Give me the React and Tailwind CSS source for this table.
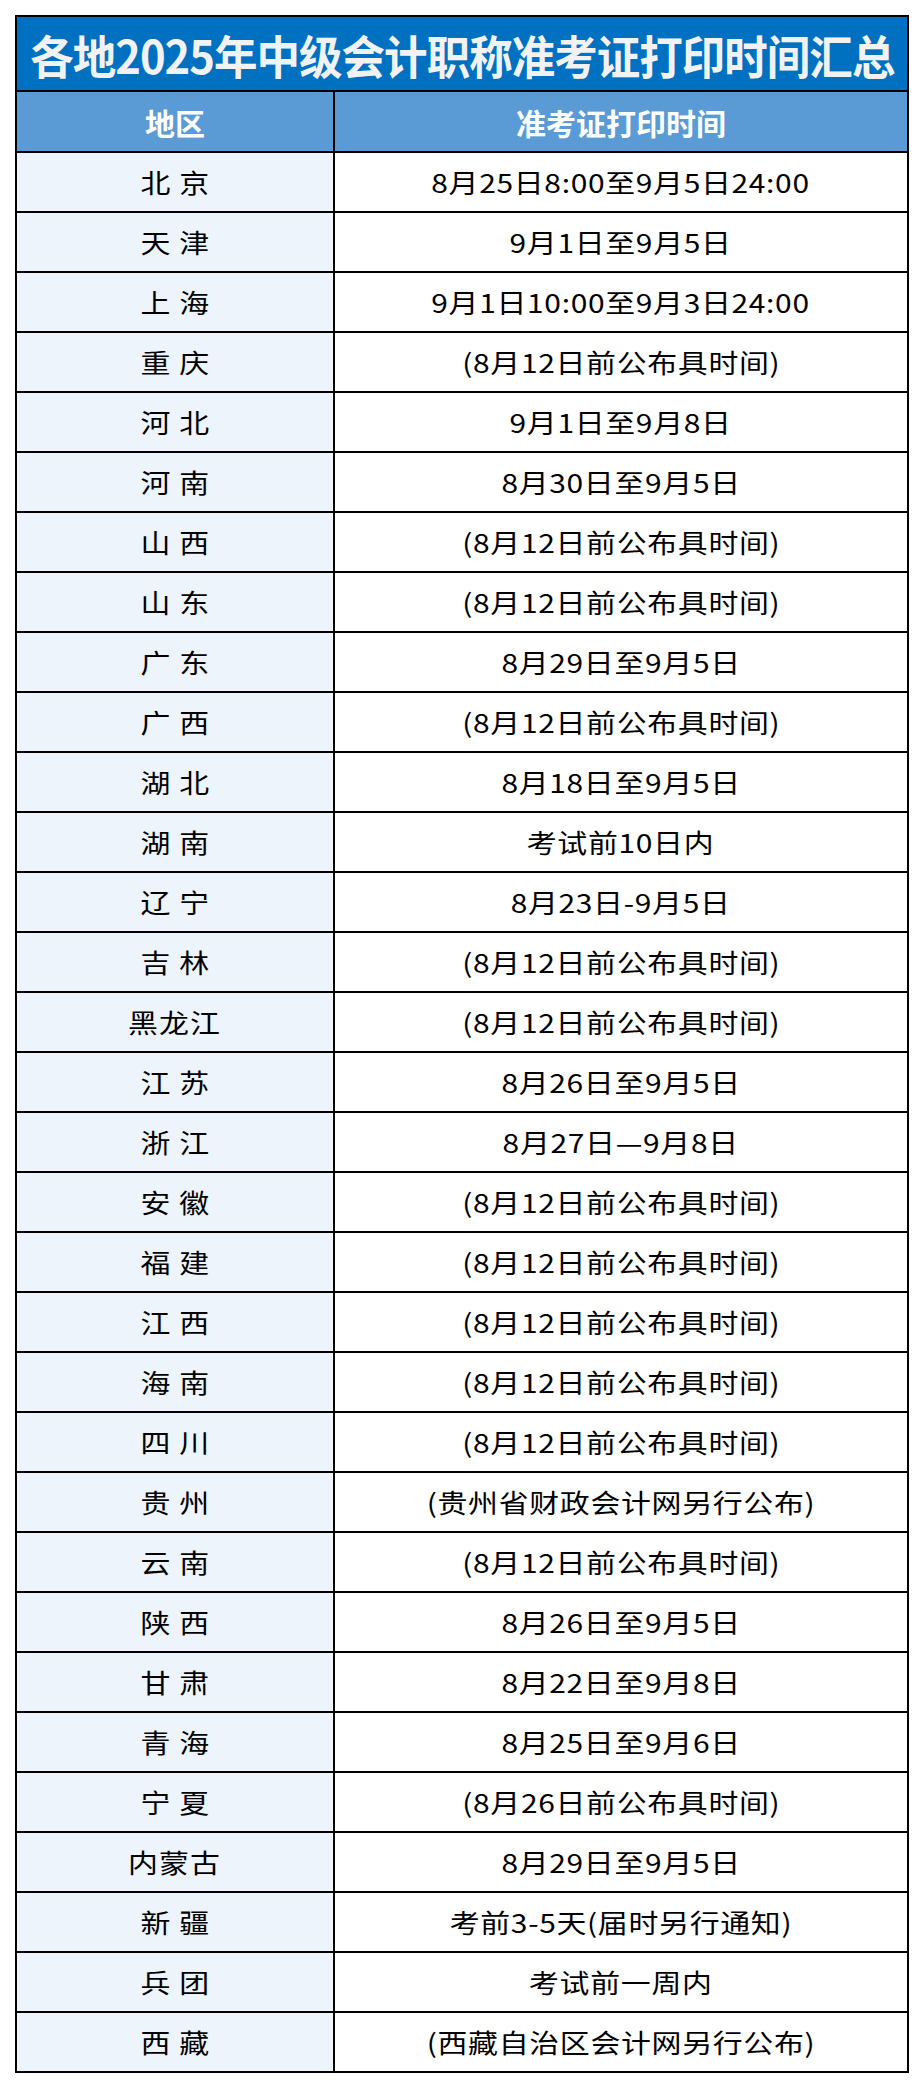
import React from "react";

const rows = [
  ["北 京", "8月25日8:00至9月5日24:00"],
  ["天 津", "9月1日至9月5日"],
  ["上 海", "9月1日10:00至9月3日24:00"],
  ["重 庆", "(8月12日前公布具时间)"],
  ["河 北", "9月1日至9月8日"],
  ["河 南", "8月30日至9月5日"],
  ["山 西", "(8月12日前公布具时间)"],
  ["山 东", "(8月12日前公布具时间)"],
  ["广 东", "8月29日至9月5日"],
  ["广 西", "(8月12日前公布具时间)"],
  ["湖 北", "8月18日至9月5日"],
  ["湖 南", "考试前10日内"],
  ["辽 宁", "8月23日-9月5日"],
  ["吉 林", "(8月12日前公布具时间)"],
  ["黑龙江", "(8月12日前公布具时间)"],
  ["江 苏", "8月26日至9月5日"],
  ["浙 江", "8月27日—9月8日"],
  ["安 徽", "(8月12日前公布具时间)"],
  ["福 建", "(8月12日前公布具时间)"],
  ["江 西", "(8月12日前公布具时间)"],
  ["海 南", "(8月12日前公布具时间)"],
  ["四 川", "(8月12日前公布具时间)"],
  ["贵 州", "(贵州省财政会计网另行公布)"],
  ["云 南", "(8月12日前公布具时间)"],
  ["陕 西", "8月26日至9月5日"],
  ["甘 肃", "8月22日至9月8日"],
  ["青 海", "8月25日至9月6日"],
  ["宁 夏", "(8月26日前公布具时间)"],
  ["内蒙古", "8月29日至9月5日"],
  ["新 疆", "考前3-5天(届时另行通知)"],
  ["兵 团", "考试前一周内"],
  ["西 藏", "(西藏自治区会计网另行公布)"],
];

const font = { fontFamily: '"Noto Sans CJK SC", "Noto Sans", sans-serif' };

export default function App() {
  return (
    <div className="w-[924px] h-[2088px] bg-white pt-[15px] pl-[15px]" style={font}>
      <div className="w-[894px] border-2 border-black">
        <div className="h-[75px] bg-[#0070C0] border-b-2 border-black flex items-center justify-center overflow-hidden">
          <span className="inline-block text-[46px] font-bold text-[#f2f2f2] leading-none whitespace-nowrap tracking-[-1px] scale-x-[0.945]">
            各地2025年中级会计职称准考证打印时间汇总
          </span>
        </div>
        <div className="h-[61px] bg-[#5B9BD5] border-b-2 border-black flex">
          <div className="w-[318px] border-r-2 border-black flex items-center justify-center">
            <span className="text-[30px] font-bold text-white leading-none">地区</span>
          </div>
          <div className="flex-1 flex items-center justify-center">
            <span className="text-[30px] font-bold text-white leading-none">准考证打印时间</span>
          </div>
        </div>
        {rows.map(([region, time], i) => (
          <div
            key={region}
            className={
              i === rows.length - 1
                ? "h-[58px] flex"
                : "h-[60px] flex border-b-2 border-black"
            }
          >
            <div className="w-[318px] bg-[#EDF4FB] border-r-2 border-black flex items-center justify-center">
              <span className="inline-block text-[26px] text-black leading-none whitespace-pre scale-x-[1.15] tracking-[1px]">
                {region}
              </span>
            </div>
            <div className="flex-1 bg-white flex items-center justify-center">
              <span className="inline-block text-[26px] text-black leading-none whitespace-pre scale-x-[1.15] tracking-[0.6px]">
                {time}
              </span>
            </div>
          </div>
        ))}
      </div>
    </div>
  );
}
